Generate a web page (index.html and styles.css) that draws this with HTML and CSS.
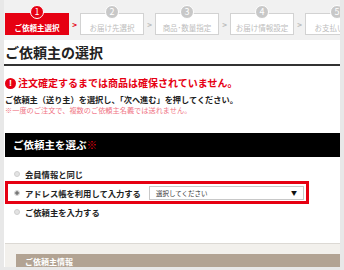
FILE: index.html
```html
<!DOCTYPE html>
<html lang="ja">
<head>
<meta charset="utf-8">
<link rel="stylesheet" href="styles.css">
</head>
<body>
<div class="frame">
  <div class="steps">
    <div class="step active"><span class="num">1</span>ご依頼主選択</div>
    <span class="arrow active-arrow">&gt;</span>
    <div class="step"><span class="num">2</span>お届け先選択</div>
    <span class="arrow">&gt;</span>
    <div class="step"><span class="num">3</span>商品･数量指定</div>
    <span class="arrow">&gt;</span>
    <div class="step"><span class="num">4</span>お届け情報設定</div>
    <span class="arrow">&gt;</span>
    <div class="step"><span class="num">5</span>お支払い方法</div>
  </div>
  <div class="main">
    <h1 class="title">ご依頼主の選択</h1>
    <p class="alert"><span class="alert-icon">!</span>注文確定するまでは商品は確保されていません。</p>
    <p class="lead">ご依頼主（送り主）を選択し、「次へ進む」を押してください。</p>
    <p class="note">※一度のご注文で、複数のご依頼主名義では送れません。</p>
    <div class="bar">ご依頼主を選ぶ<span class="req">※</span></div>
    <div class="options">
      <div class="opt"><span class="radio"></span>会員情報と同じ</div>
      <div class="opt selected"><span class="radio on"></span>アドレス帳を利用して入力する
        <div class="select"><span>選択してください</span><span class="caret">▼</span></div>
      </div>
      <div class="opt"><span class="radio"></span>ご依頼主を入力する</div>
    </div>
    <div class="panel">
      <div class="panel-bar">ご依頼主情報</div>
    </div>
  </div>
</div>
</body>
</html>
```

FILE: styles.css
```css
html, body {
  margin: 0;
  padding: 0;
}
body {
  width: 344px;
  height: 270px;
  overflow: hidden;
  background: #e8e8e8;
  font-family: "Noto Sans CJK JP", "Noto Sans", sans-serif;
}
.frame {
  margin: 0 4px;
  height: 267px;
  background: #fff;
  overflow: hidden;
}
.steps {
  height: 40px;
  box-sizing: border-box;
  background: #f1f1f1;
  display: flex;
  align-items: flex-start;
  padding: 13px 0 0 1px;
}
.step {
  position: relative;
  flex: none;
  width: 64px;
  height: 22px;
  box-sizing: border-box;
  border: 1px solid #d2d2d2;
  background: #fff;
  color: #bdbdbd;
  font-size: 7.5px;
  display: flex;
  align-items: center;
  justify-content: center;
  padding-top: 6px;
  white-space: nowrap;
}
.step.active {
  background: #e60012;
  border-color: #e60012;
  color: #fff;
  font-weight: bold;
}
.num {
  position: absolute;
  left: 50%;
  top: -9px;
  width: 14px;
  height: 14px;
  margin-left: -7px;
  box-sizing: border-box;
  border: 1px solid #fff;
  border-radius: 50%;
  background: #c8c8c8;
  color: #fff;
  font-size: 9px;
  line-height: 12px;
  text-align: center;
  font-weight: normal;
}
.step.active .num {
  background: #e60012;
}
.arrow {
  flex: none;
  width: 11px;
  text-align: center;
  font-size: 8px;
  line-height: 24px;
  color: #bbb;
  font-weight: bold;
}
.arrow.active-arrow {
  color: #e60012;
}
.main {
  padding: 0 0 0 1px;
}
.title {
  margin: 0 0 0 -1px;
  padding-left: 1px;
  height: 24px;
  font-size: 14px;
  line-height: 24px;
  font-weight: bold;
  color: #222;
  border-bottom: 2px solid #333;
}
.alert {
  margin: 10px 0 0;
  display: flex;
  align-items: center;
  font-size: 10px;
  line-height: 14px;
  font-weight: bold;
  color: #e60012;
  white-space: nowrap;
}
.alert-icon {
  width: 11px;
  height: 11px;
  border-radius: 50%;
  background: #e60012;
  color: #fff;
  font-size: 9px;
  line-height: 11px;
  text-align: center;
  margin-right: 2px;
  font-family: "Liberation Sans", sans-serif;
}
.lead {
  margin: 4px 0 0;
  font-size: 8.2px;
  line-height: 11px;
  font-weight: bold;
  color: #222;
  white-space: nowrap;
}
.note {
  margin: 0;
  font-size: 7.2px;
  line-height: 10px;
  color: #f07585;
  white-space: nowrap;
}
.bar {
  margin-top: 18px;
  height: 24px;
  background: #000;
  color: #fff;
  font-size: 10.5px;
  line-height: 24px;
  font-weight: bold;
  padding-left: 8px;
}
.req {
  color: #e60012;
}
.options {
  padding: 9px 0 0 0;
  height: 86px;
  box-sizing: border-box;
}
.opt {
  display: flex;
  align-items: center;
  height: 15px;
  font-size: 8.3px;
  font-weight: bold;
  color: #222;
  padding-left: 9px;
  white-space: nowrap;
}
.opt.selected {
  height: 23px;
  box-sizing: border-box;
  border: 3px solid #e60012;
  padding-left: 6px;
  width: 304px;
}
.radio {
  width: 6px;
  height: 6px;
  border-radius: 50%;
  background: #e3e3e3;
  border: 1px solid #cfcfcf;
  box-sizing: border-box;
  margin-right: 5px;
  flex: none;
}
.radio.on {
  background: radial-gradient(circle, #777 0 1.5px, #e3e3e3 2px);
}
.select {
  margin-left: 8px;
  width: 155px;
  height: 14px;
  box-sizing: border-box;
  border: 1px solid #c8c8c8;
  background: #fff;
  display: flex;
  align-items: center;
  justify-content: space-between;
  padding: 0 6px;
  font-size: 6.5px;
  font-weight: normal;
  color: #333;
}
.caret {
  font-size: 6px;
  color: #111;
}
.panel {
  height: 30px;
  background: #f2f0ec;
  border-top: 1px solid #dcd9d4;
  padding: 10px 0 0 11px;
  box-sizing: border-box;
}
.panel-bar {
  height: 20px;
  background: #b2a393;
  color: #fff;
  font-size: 8px;
  line-height: 15px;
  padding-left: 9px;
  font-weight: bold;
}
```
